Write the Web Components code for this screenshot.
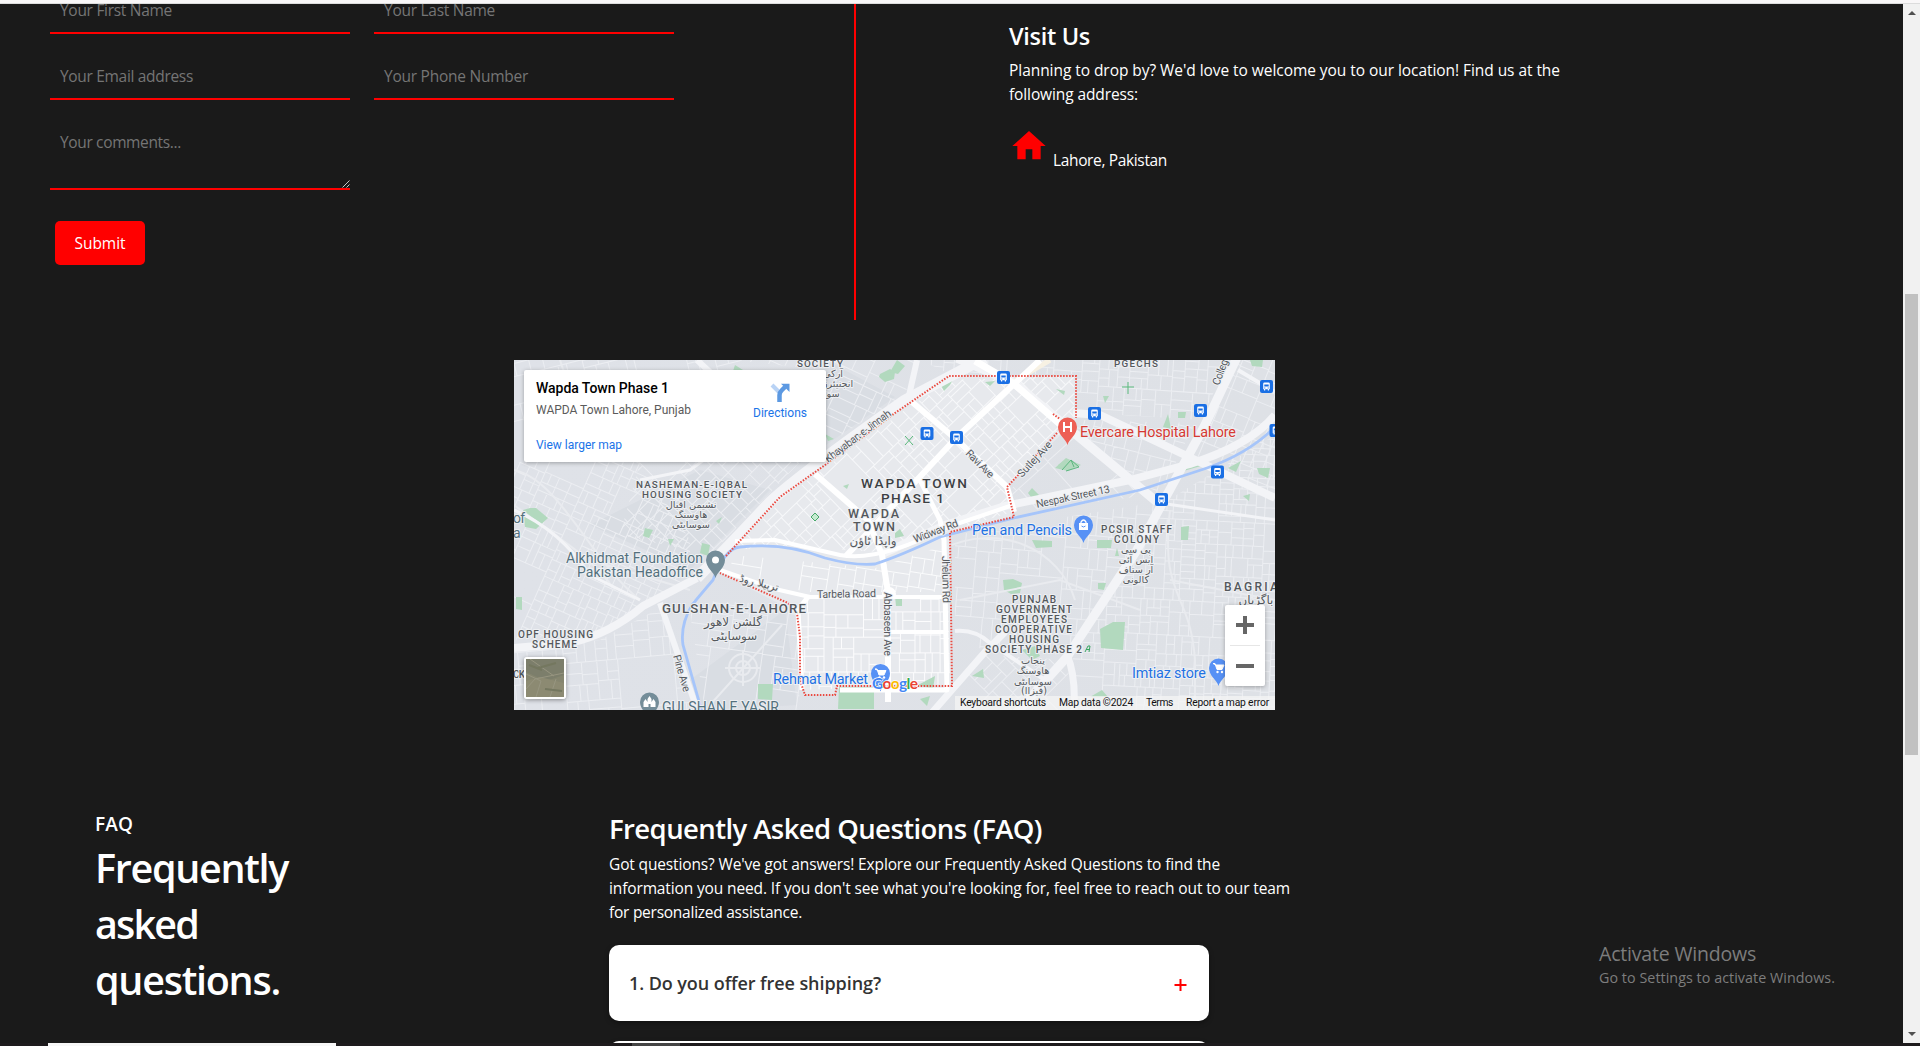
<!DOCTYPE html>
<html lang="en">
<head>
<meta charset="utf-8">
<title>Contact and FAQ</title>
<style>
html,body{margin:0;height:100%;overflow:hidden;background:#1a1a1a}
body{font-family:"Open Sans","Noto Sans",sans-serif;color:#fff}
</style>
</head>
<body>
<page-shell>
  <contact-section></contact-section>
  <town-map></town-map>
  <faq-section></faq-section>
</page-shell>
<script>
const define = (name, html, setup) => customElements.define(name, class extends HTMLElement {
  constructor() {
    super();
    this.attachShadow({mode: 'open'}).innerHTML = typeof html === 'function' ? html(this) : html;
  }
  connectedCallback() { if (setup) setup(this); }
});

/* A single line of text whose tracking is tuned to a given measure. */
define('text-line', `<style>
:host{display:block;white-space:nowrap}
span{display:inline-block}
</style><span><slot></slot></span>`, el => {
  const span = el.shadowRoot.querySelector('span');
  const want = +el.getAttribute('measure');
  if (!want) return;
  const have = span.getBoundingClientRect().width;
  const n = el.textContent.length;
  span.style.letterSpacing = ((want - have) / n).toFixed(3) + 'px';
});

define('form-field', el => `<style>
:host{display:block;box-sizing:border-box;height:46px;padding:10px 10px 0;border-bottom:2px solid #f00;color:#757575;font-size:15.500px;line-height:24px;position:relative}
:host([multiline]){height:70px}
svg{position:absolute;right:0;bottom:0;display:none}
:host([multiline]) svg{display:block}
</style><slot></slot><svg width="9" height="9" viewBox="0 0 9 9"><path d="M1.500 8.500L8.500 1.500M5.500 8.500L8.500 5.500" stroke="#c8c8c8" fill="none"/></svg>`);

define('submit-button', `<style>
:host{display:flex;width:90px;height:44px;align-items:center;justify-content:center;background:#f00;color:#fff;border-radius:5px;font-size:15.500px;line-height:24px}
</style><slot></slot>`);

define('contact-section', `<style>
:host{display:flex;height:356px}
form{width:804px;padding-left:50px;margin-top:-16px}
.grid{display:grid;grid-template-columns:300px 300px;gap:20px 24px}
submit-button{margin:31px 0 0 5px}
.rule{width:2px;height:316px;background:#f00}
.info{margin-left:153px;padding-top:18px;font-size:15.500px;line-height:24px}
h3{margin:0 0 7px;font-size:23.500px;line-height:29px;font-weight:600}
.place{display:flex;align-items:flex-end;gap:4px;height:46px;margin-top:20px}
.place svg{align-self:flex-start;fill:#f00}
</style>
<form><div class="grid">
<form-field><text-line measure="112">Your First Name</text-line></form-field>
<form-field><text-line measure="111">Your Last Name</text-line></form-field>
<form-field><text-line measure="133">Your Email address</text-line></form-field>
<form-field><text-line measure="144">Your Phone Number</text-line></form-field>
<form-field multiline><text-line measure="121">Your comments...</text-line></form-field>
</div><submit-button><text-line measure="51">Submit</text-line></submit-button></form>
<div class="rule"></div>
<div class="info"><h3><text-line measure="81">Visit Us</text-line></h3>
<text-line measure="551">Planning to drop by? We'd love to welcome you to our location! Find us at the</text-line>
<text-line measure="129">following address:</text-line>
<div class="place"><svg width="40" height="40" viewBox="0 0 24 24"><path d="M10 20v-6h4v6h5v-8h3L12 3 2 12h3v8z"/></svg><text-line measure="114">Lahore, Pakistan</text-line></div></div>`);

define('faq-card', `<style>
:host{display:flex;box-sizing:border-box;width:600px;height:76px;padding:0 22px 0 20px;align-items:center;justify-content:space-between;background:#fff;border-radius:10px;color:#333;font-size:18px;font-weight:600;line-height:26px;box-shadow:0 2px 5px rgba(0,0,0,.35)}
svg{margin-top:4px}
</style><slot></slot><svg width="14" height="14" viewBox="0 0 14 14"><path d="M7.500 1V13M1.500 7H13.500" stroke="#f00" stroke-width="2"/></svg>`);

define('faq-section', `<style>
:host{display:flex;padding:101px 0 0 48px}
.left{width:561px;flex:none}
h4,h1,h2{margin:0;font-weight:600}
h4{font-size:19px;line-height:27px;padding-left:47px}
h1{font-size:39.500px;line-height:56px;margin:2px 0 35px;padding-left:47px}
.frame{width:288px;height:60px;box-sizing:border-box;background:#f7f7f7;border:1px solid #bbb}
.frame i{display:block;width:6px;height:3px;margin-left:222px;background:#85788d;border-radius:3px 3px 0 0}
.right{padding-top:1px;font-size:15.500px;line-height:24px}
h2{font-size:27.500px;line-height:34px;margin-bottom:6px}
faq-card{margin-top:20px}
faq-card.first{margin-top:21px}
</style>
<div class="left"><h4><text-line measure="38">FAQ</text-line></h4>
<h1><text-line measure="193">Frequently</text-line><text-line measure="103">asked</text-line><text-line measure="185">questions.</text-line></h1>
<div class="frame"><i></i></div></div>
<div class="right"><h2><text-line measure="433">Frequently Asked Questions (FAQ)</text-line></h2>
<text-line measure="611">Got questions? We've got answers! Explore our Frequently Asked Questions to find the</text-line>
<text-line measure="681">information you need. If you don't see what you're looking for, feel free to reach out to our team</text-line>
<text-line measure="193">for personalized assistance.</text-line>
<faq-card class="first"><text-line measure="252">1. Do you offer free shipping?</text-line></faq-card>
<faq-card></faq-card></div>`);

define('scroll-rail', `<style>
:host{display:flex;flex-direction:column;width:17px;flex:none;background:#f1f1f1;align-items:center}
.up{margin-top:7px}.thumb{width:13px;height:461px;background:#c1c1c1;margin-top:279px}
.down{margin-top:auto;margin-bottom:7px}svg{display:block}
</style><svg class="up" width="8" height="4"><path d="M0 4L4 0L8 4z" fill="#505050"/></svg><div class="thumb"></div><svg class="down" width="8" height="4"><path d="M0 0H8L4 4z" fill="#505050"/></svg>`);

define('system-notice', `<style>
:host{display:block;position:absolute;left:1599px;top:940px;color:#7d7d7d}
.a{font-size:19.500px;line-height:28px}.b{font-size:14.300px;line-height:19px}
</style><text-line class="a" measure="157">Activate Windows</text-line><text-line class="b" measure="236">Go to Settings to activate Windows.</text-line>`);

define('page-shell', `<style>
:host{display:flex;flex-direction:column;height:1046px;width:1920px;overflow:hidden;position:relative}
.top{height:3px;background:#f9f7f8;border-bottom:1px solid #dcdcdc}
.row{display:flex;height:1039px;flex:none}
main{width:1903px;height:1039px;overflow:hidden;background:#1a1a1a}
.bottom{height:3px;background:#1e1b1d;display:flex;flex:none}
.bottom i{margin-left:48px;width:288px;background:#f7f7f7}
.bottom b{margin-left:296px;width:48px;background:#454545}
</style><div class="top"></div><div class="row"><main><slot></slot></main><scroll-rail></scroll-rail></div><div class="bottom"><i></i><b></b></div><system-notice></system-notice>`);

/* ---- map ---- */
function rng(seed) { return () => (seed = (seed * 16807) % 2147483647) / 2147483647; }
/* Recursively splits a rectangle into city blocks; returns the street lines. */
function blocks(x, y, w, h, min, r, out) {
  if (w < min * 1.7 && h < min * 1.7) return;
  const vertical = w / h > 0.6 + r() * 0.9, t = 0.3 + r() * 0.4;
  if (r() < 0.08 && w < min * 6 && h < min * 6) return;
  if (vertical) {
    const c = x + w * t; out.push(`M${c.toFixed(1)} ${y.toFixed(1)}v${h.toFixed(1)}`);
    if (c - x > min) blocks(x, y, c - x, h, min, r, out);
    if (x + w - c > min) blocks(c, y, x + w - c, h, min, r, out);
  } else {
    const c = y + h * t; out.push(`M${x.toFixed(1)} ${c.toFixed(1)}h${w.toFixed(1)}`);
    if (c - y > min) blocks(x, y, w, c - y, min, r, out);
    if (y + h - c > min) blocks(x, c, w, y + h - c, min, r, out);
  }
}
let areaId = 0;
function area(poly, angle, min, seed, color = '#eceef2') {
  const p = poly.split(' ').map(s => s.split(',').map(Number));
  const xs = p.map(a => a[0]), ys = p.map(a => a[1]);
  const cx = (Math.min(...xs) + Math.max(...xs)) / 2, cy = (Math.min(...ys) + Math.max(...ys)) / 2;
  const d = Math.hypot(Math.max(...xs) - Math.min(...xs), Math.max(...ys) - Math.min(...ys)) / 2;
  const out = []; blocks(-d, -d, 2 * d, 2 * d, min, rng(seed), out);
  const id = 'a' + (++areaId);
  return `<clipPath id="${id}"><polygon points="${poly}"/></clipPath><g clip-path="url(#${id})"><path transform="translate(${cx} ${cy}) rotate(${angle})" d="${out.join('')}" fill="none" stroke="${color}" stroke-width="1"/></g>`;
}
const road = (d, w, c = '#f3f4f7') => `<path d="${d}" fill="none" stroke="${c}" stroke-width="${w}" stroke-linejoin="round"/>`;
const T = (x, y, len, size, s, cls = 'n', extra = '') => `<text x="${x}" y="${y}" textLength="${len}" font-size="${size}" class="${cls}" ${extra}>${s}</text>`;
const R = (x, y, len, ang, s) => T(0, 0, len, 10.8, s, 'st', `transform="translate(${x} ${y}) rotate(${ang})"`);
const U = (x, y, size, s) => `<text x="${x}" y="${y}" font-size="${size * 1.08}" class="ur" text-anchor="middle" direction="rtl">${s}</text>`;
const bus = (x, y) => `<g transform="translate(${x - 6.5} ${y - 6.5})"><rect width="13" height="13" rx="2" fill="#1a6fe4"/><path d="M3.200 3.700Q3.200 2.500 4.500 2.500H8.500Q9.800 2.500 9.800 3.700V9.300H9V10.500H7.800V9.300H5.200V10.500H4V9.300H3.200z" fill="#fff"/><path d="M4.300 4.400H8.700V6.500H4.300zM4.300 7.500h1v1h-1zM7.700 7.500h1v1h-1z" fill="#1a6fe4"/></g>`;
const pin = (x, y, c, inner) => `<g transform="translate(${x} ${y})"><path d="M0 18C-1.500 12-9.500 8-9.500 0A9.500 9.500 0 0 1 9.500 0C9.500 8 1.500 12 0 18z" fill="${c}"/>${inner}</g>`;
const cart = `<path d="M-5.500-4.500H-3.500L-1.500 1.500H3.500L5.500-3H-2.500z" fill="#fff" stroke="#fff"/><circle cx="-1" cy="4" r="1.200" fill="#fff"/><circle cx="3.500" cy="4" r="1.200" fill="#fff"/>`;
const parks = ['735,365 743,370 733,371','880,374 890,369 895,372 894,379 885,382 879,377','523,510 530,508 536,508 548,518 536,529 525,527','825,434 834,439 828,441','645,528 653,530 649,538 643,536','716,521 722,517 719,524','702,543 710,545 708,556 700,553','516,597 522,597 522,610 516,609','758,684 773,684 772,700 758,699','839,687 874,687 874,709 838,709','938,380 955,376 950,385 944,391','985,382 995,381 990,386','1056,389 1065,391 1064,395','1103,396 1109,396 1105,403','1178,412 1186,412 1185,418 1178,418','1168,414 1171,429 1163,427','1055,468 1066,458 1081,465 1068,471','1184,457 1201,466 1180,472','1228,468 1241,461 1236,472','1214,453 1221,452 1215,455','1257,468 1270,468 1268,478 1259,474','1028,493 1032,488 1040,496 1031,497','890,372 897,360 905,366 898,374','1250,360 1263,360 1262,367 1252,366','1181,527 1189,526 1188,540 1181,540','1032,540 1052,541 1052,547 1036,548','1097,540 1112,540 1111,548 1097,548','1003,580 1013,579 1022,583 1020,593 1011,594 1004,590','1098,583 1106,583 1104,590 1098,589','1100,629 1113,622 1125,622 1123,650 1101,648','972,676 983,669 984,678','918,685 935,676 933,689','920,699 930,696 927,706','1090,697 1102,690 1108,697','895,596 902,596 902,606 896,606','895,533 900,529 904,536 895,538','843,486 849,484 847,489','1058,465 1064,461 1063,470','1022,650 1035,646 1040,656 1032,660','1117,548 1119,556 1115,556','668,539 674,539 670,546','1243,496 1250,494 1249,501'];
const grey = '#e9ebef', W = '#ffffff';
const mapSvg = () => `<svg width="761" height="350" viewBox="514 360 761 350">
<defs><linearGradient id="land" x2="1"><stop stop-color="#dfe2e8"/><stop offset="1" stop-color="#dee1e6"/></linearGradient></defs>
<rect x="514" y="360" width="761" height="350" fill="url(#land)"/>
<path d="M735 400L835 365L895 397L800 463L735 463zM590 525L700 470L770 490L690 570zM690 680L785 610L797 705L705 710z" fill="#d9dde3"/>
<path d="M726 556L780 497L825 465L895 413L949 376H1076V420L1007 487L1014 517L950 532L952 686H837L835 695H805L800 637L797 613L720 573z" fill="#e7e9ed"/>
${area('514,462 640,462 690,540 690,575 610,630 514,640', 24, 9, 31)}
${area('514,360 740,360 740,430 514,430', -14, 11, 77)}
${area('640,462 800,462 710,555 620,535', -45, 10, 15)}
${area('514,648 600,640 665,605 692,710 514,710', -5, 11, 99)}
${area('688,600 795,605 800,710 705,710', 8, 14, 44)}
${area('730,360 915,360 905,395 826,445 826,370', 25, 12, 55)}
${area('920,360 1230,360 1200,420 1075,412 1075,374 950,374', 4, 10, 66)}
${area('1080,420 1195,423 1160,495 1070,430', 14, 11, 12)}
${area('1235,360 1275,360 1275,490 1190,455', 22, 10, 13)}
${area('1010,490 1070,432 1150,495 1020,512', -42, 15, 17)}
${area('955,535 1170,500 1140,550 1065,655 985,650 955,640', 5, 11, 19)}
${area('1160,505 1275,435 1275,710 1080,710 1072,655 1140,550', 3, 8, 23)}
${area('955,690 985,655 1068,660 1070,710 940,710', -45, 12, 29)}
${area('730,552 785,497 905,410 950,380 1074,376 1074,420 1007,487 1012,512 880,552 770,545', 46, 9, 37, '#f7f8fa')}
${area('733,555 875,568 945,545 948,592 805,592 730,570', 9, 12, 41, '#fafbfc')}
${area('800,600 948,596 950,684 803,690', 0, 10, 43, '#fcfcfd')}
${parks.map(p => `<polygon points="${p}" fill="#b2d9be"/>`).join('')}
<g fill="none" stroke="${grey}" stroke-width="2"><circle cx="743" cy="668" r="14"/><circle cx="743" cy="668" r="7"/><path d="M743 650V686M725 668H761M710 705L782 625M560 360C570 400 610 420 640 462M514 470C560 480 590 560 640 600M514 505C560 540 590 555 615 590M590 560L690 590M940 550C1000 520 1060 550 1075 600M960 600L1060 580L1140 610M1170 510C1160 600 1190 590 1195 660V710M1275 600L1170 580"/></g>
${road('M514 648L570 643Q610 634 643 606L697 578', 8)}
${road('M697 578Q730 545 770 502Q800 474 905 400L985 358', 11)}
${road('M917 360L908 400M697 360L740 400', 6)}
${road('M660 603L698 712', 6)}
${road('M640 480L690 470L745 430', 3)}
${road('M514 510Q560 530 590 575L640 600', 3)}
${road('M957 358L1013 382L1067 427L1157 502', 9)}
${road('M1050 360L1010 384', 5, '#f7f1e3')}
${road('M1073 413L1100 415L1185 455L1275 498', 8)}
${road('M1238 355L1205 425L1137 550L1067 657L1010 720', 9)}
${road('M1067 655Q1076 675 1074 712M930 715L985 652L1005 632', 7)}
${road('M955 631Q975 629 990 643L1045 680', 4)}
${road('M1238 370L1275 392', 4)}
${road('M880 555L945 525L1005 506L1130 480L1190 464Q1250 445 1275 415', 8)}
${road('M1160 503L1275 520', 3)}
<g>${road('M912 402L957 440L1007 487L1014 512', 6, W)}${road('M1040 360L957 437L875 525L846 556', 6, W)}${road('M975 361L1013 383L1060 424', 7, W)}${road('M815 474L868 520L882 555L888 592V702', 6, W)}${road('M920 480L940 520L944 540L947 690H840', 5, W)}${road('M720 570L775 589L810 597H945M890 632H947', 4, W)}${road('M808 597L798 610L802 690', 5, W)}${road('M735 541L775 540L840 555Q880 562 945 528L1010 506', 4, W)}<circle cx="889" cy="594" r="7" fill="#fff"/></g>
<path d="M702 712L683 645Q680 625 692 605Q701 594 713 580Q725 548 740 547Q785 542 825 558Q855 566 875 564Q900 556 940 537L1014 518L1140 490L1207 468Q1250 453 1277 425" fill="none" stroke="#a6c5fa" stroke-width="2.800"/>
<path d="M726 556L780 497L825 465L895 413L949 376H1076V418M1053 414L1060 419M1057 433L1007 487L1014 517L950 532L952 686H837L835 695H805L800 680V637L797 613L788 603L720 573" fill="none" stroke="#ea4a40" stroke-width="2" stroke-dasharray="1.500 1.500"/>
<path d="M905 436L913 445M913 436L905 445M1128 382V394M1122 387H1134" stroke="#58b87a" fill="none"/><path d="M815 513L819 517L815 521L811 517z" fill="#c5ead0" stroke="#47a869"/><path d="M1062 470L1071 460L1079 467L1066 471M1071 460L1074 467" stroke="#5cb780" fill="none"/>
${R(828, 463, 80, -37, 'Khayaban-e-Jinnah')}${R(965, 454, 35, 45, 'Ravi Ave')}${R(1022, 478, 45, -47, 'Sutlej Ave')}${R(1037, 508, 75, -12, 'Nespak Street 13')}${R(915, 543, 47, -21, 'Widway Rd')}${R(817, 598, 59, -1, 'Tarbela Road')}${R(884, 592, 64, 90, 'Abbaseen Ave')}${R(942, 556, 47, 89, 'Jhelum Rd')}${R(673, 656, 38, 74, 'Pine Ave')}${R(1219, 386, 32, -70, 'College')}
<g transform="rotate(14 757 583)">${U(759, 586, 10, 'تربیلا روڈ')}</g>
${T(797, 366.500, 46, 9.8, 'SOCIETY')}${U(833, 377, 9, 'آرکی')}${U(838, 387, 9, 'انجنیئرز')}${U(833, 397, 9, 'سو')}
${T(1114, 367, 44, 9.8, 'PGECHS')}
${T(636, 488, 111, 9.8, 'NASHEMAN-E-IQBAL')}${T(642, 498, 100, 9.8, 'HOUSING SOCIETY')}${U(691, 508, 9, 'نشیمن اقبال')}${U(691, 518, 9, 'ھاوسنگ')}${U(691, 528, 9, 'سوسایٹی')}
${T(861, 488, 106, 13.6, 'WAPDA TOWN', 'd')}${T(881, 502.500, 63, 13.6, 'PHASE 1', 'd')}
${T(848, 518, 51, 12.6, 'WAPDA')}${T(853, 531, 42, 12.6, 'TOWN')}${U(873, 545, 11, 'واپڈا ٹاؤن')}
${T(662, 613, 144, 13.2, 'GULSHAN-E-LAHORE')}${U(733, 626, 11, 'گلشن لاھور')}${U(734, 640, 11, 'سوسایٹی')}
${T(518, 637.500, 75, 10, 'OPF HOUSING')}${T(532, 647.500, 45, 10, 'SCHEME')}${T(513, 678, 12, 10, 'CK')}
${T(1101, 532.500, 71, 10, 'PCSIR STAFF')}${T(1114, 542.500, 45, 10, 'COLONY')}${U(1136, 553, 9, 'پی سی')}${U(1136, 563, 9, 'ایس آئی')}${U(1136, 573, 9, 'آر ستاف')}${U(1136, 583, 9, 'کالونی')}
${T(1012, 603, 44, 10, 'PUNJAB')}${T(996, 613, 76, 10, 'GOVERNMENT')}${T(1001, 623, 66, 10, 'EMPLOYEES')}${T(995, 633, 77, 10, 'COOPERATIVE')}${T(1009, 643, 50, 10, 'HOUSING')}${T(985, 653, 97, 10, 'SOCIETY PHASE 2')}
${U(1033, 664, 9, 'پنجاب')}${U(1033, 674, 9, 'ھاوسنگ')}${U(1033, 685, 9, 'سوسایٹی')}${U(1034, 694, 9, '(فیزاا)')}
${T(1224, 591, 54, 12, 'BAGRIA')}${U(1256, 604, 11, 'باگڑیاں')}
${T(513, 523, 12, 14, 'of', 'pl')}${T(513, 538, 7, 14, 'a', 'pl')}
${T(566, 563, 137, 14, 'Alkhidmat Foundation', 'pl')}${T(577, 577, 126, 14, 'Pakistan Headoffice', 'pl')}${T(662, 712, 117, 14, 'GULSHAN E YASIR', 'pl')}
${T(1080, 437, 156, 14.4, 'Evercare Hospital Lahore', 'rd')}
${T(972, 535, 100, 14.4, 'Pen and Pencils', 'bl')}${T(773, 684, 95, 14.4, 'Rehmat Market', 'bl')}${T(1132, 678, 74, 14.4, 'Imtiaz store', 'bl')}
<path d="M1085 652L1088 646H1090L1089 652M1086 649.500H1090" stroke="#3ba763" fill="none"/>
${[[1003.500,377.500],[927,433.500],[956.500,437.500],[1094.500,413.500],[1200.500,410.500],[1266.500,386.500],[1217.500,472],[1161.500,499.500],[1276,430.500]].map(a => bus(...a)).join('')}
${pin(1067.500, 427, '#ed5f55', '<path d="M-3.500-5V5M3.500-5V5M-3.500 0H3.500" stroke="#fff" stroke-width="2"/>')}
${pin(715.500, 560, '#748d99', '<circle r="3.500" fill="#fff"/>')}
${pin(1083.500, 525, '#5791f5', '<path d="M-4.500-2H4.500V5H-4.500z" fill="#fff"/><path d="M-2.500-1V-3Q0-7 2.500-3V-1" fill="none" stroke="#fff" stroke-width="1.300"/><path d="M-2 1Q0 3 2 1" fill="none" stroke="#5791f5"/>')}
${pin(880.500, 673.500, '#5791f5', cart)}${pin(1218.500, 668, '#5791f5', cart)}
${pin(649.500, 702, '#748d99', '<path d="M-6 5V0L-4-3L-2 0V-3L0-6L2-3V0L4-3L6 0V5H1V2H-1V5z" fill="#fff"/>')}
<text x="872" y="688.500" font-size="15.500" textLength="46" class="logo"><tspan fill="#4285f4">G</tspan><tspan fill="#ea4335">o</tspan><tspan fill="#fbbc05">o</tspan><tspan fill="#4285f4">g</tspan><tspan fill="#34a853">l</tspan><tspan fill="#ea4335">e</tspan></text>
</svg>`;

define('place-card', `<style>
:host{display:flex;justify-content:space-between;box-sizing:border-box;width:302px;height:92px;padding:11px 19px 0 12px;background:#fff;border-radius:2px;box-shadow:0 1px 4px rgba(0,0,0,.3);font-family:Roboto,sans-serif;font-size:12px;line-height:16px;color:#5b5b5b}
.t{font-size:14px;font-weight:500;color:#000;margin-bottom:6px;line-height:15px}
.l{color:#1a73e8;margin-top:19px}
.d{display:flex;flex-direction:column;align-items:center;color:#1a73e8;padding-top:2px}
.d svg{margin-bottom:3px}
</style><div><text-line class="t" measure="133">Wapda Town Phase 1</text-line><text-line measure="155">WAPDA Town Lahore, Punjab</text-line><text-line class="l" measure="86">View larger map</text-line></div>
<div class="d"><svg width="20" height="19" viewBox="0 0 20 19"><path d="M2 2L9 9" stroke="#b9d3f5" stroke-width="4"/><path d="M9.500 19V12Q9.500 9.500 12 7L15 4" fill="none" stroke="#5c99e2" stroke-width="4.500"/><path d="M11 .8H19.500V9z" fill="#5c99e2"/></svg><text-line measure="54">Directions</text-line></div>`);

define('zoom-control', `<style>
:host{display:block;width:40px;height:81px;background:#fff;border-radius:2px;box-shadow:0 1px 4px rgba(0,0,0,.3)}svg{display:block}
</style><svg width="40" height="81"><path d="M11 20H29M20 11V29M11 61H29" stroke="#666" stroke-width="4"/><path d="M5 40.500H35" stroke="#e6e6e6"/></svg>`);

define('satellite-thumb', `<style>
:host{display:block;box-sizing:border-box;width:42px;height:42px;border:2px solid #fff;border-radius:3px;box-shadow:0 1px 4px rgba(0,0,0,.4)}svg{display:block}
</style><svg width="38" height="38"><rect width="38" height="38" fill="#85856f"/><path d="M0 0H38V16L20 22L0 13z" fill="#7c7e6b"/><path d="M0 22L14 18L38 24V38H0z" fill="#8c8a72"/><path d="M0 30L9 20L38 14M4 0L28 17M0 15L15 22L10 38M24 38L30 20" stroke="#979580" fill="none"/><path d="M12 9L30 4M19 30L36 32M3 6L16 11" stroke="#74775f" stroke-width="2"/></svg>`);

define('map-legal', `<style>
:host{display:flex;box-sizing:border-box;width:320px;height:14px;padding-left:5px;background:rgba(245,245,245,.72);font:10.300px/13px Roboto,sans-serif;color:#111;gap:13px}
</style><text-line measure="86">Keyboard shortcuts</text-line><text-line measure="74">Map data ©2024</text-line><text-line measure="27">Terms</text-line><text-line measure="83">Report a map error</text-line>`);

define('town-map', () => `<style>
:host{display:block;position:relative;width:761px;height:350px;margin-left:514px;overflow:hidden;background:#dfe2e7}
svg{display:block}
text{font-family:Roboto,"Open Sans",sans-serif;paint-order:stroke;stroke:#eef0f3;stroke-width:2px;stroke-linejoin:round}
.n{fill:#54585c;font-weight:500}.d{fill:#3c4043;font-weight:500}.st{fill:#55595e}
.ur{font-family:"DejaVu Sans",sans-serif;fill:#54585c}
.pl{fill:#54707d}.rd{fill:#d63a32}.bl{fill:#1f72e3}
.logo{stroke:#fff;stroke-width:1.500px;font-family:Lato,sans-serif;font-weight:700}
place-card{position:absolute;left:10px;top:10px}
satellite-thumb{position:absolute;left:10px;top:297px}
zoom-control{position:absolute;right:10px;top:245px}
map-legal{position:absolute;right:0;bottom:0}
</style>${mapSvg()}<place-card></place-card><satellite-thumb></satellite-thumb><zoom-control></zoom-control><map-legal></map-legal>`);
</script>
</body>
</html>
